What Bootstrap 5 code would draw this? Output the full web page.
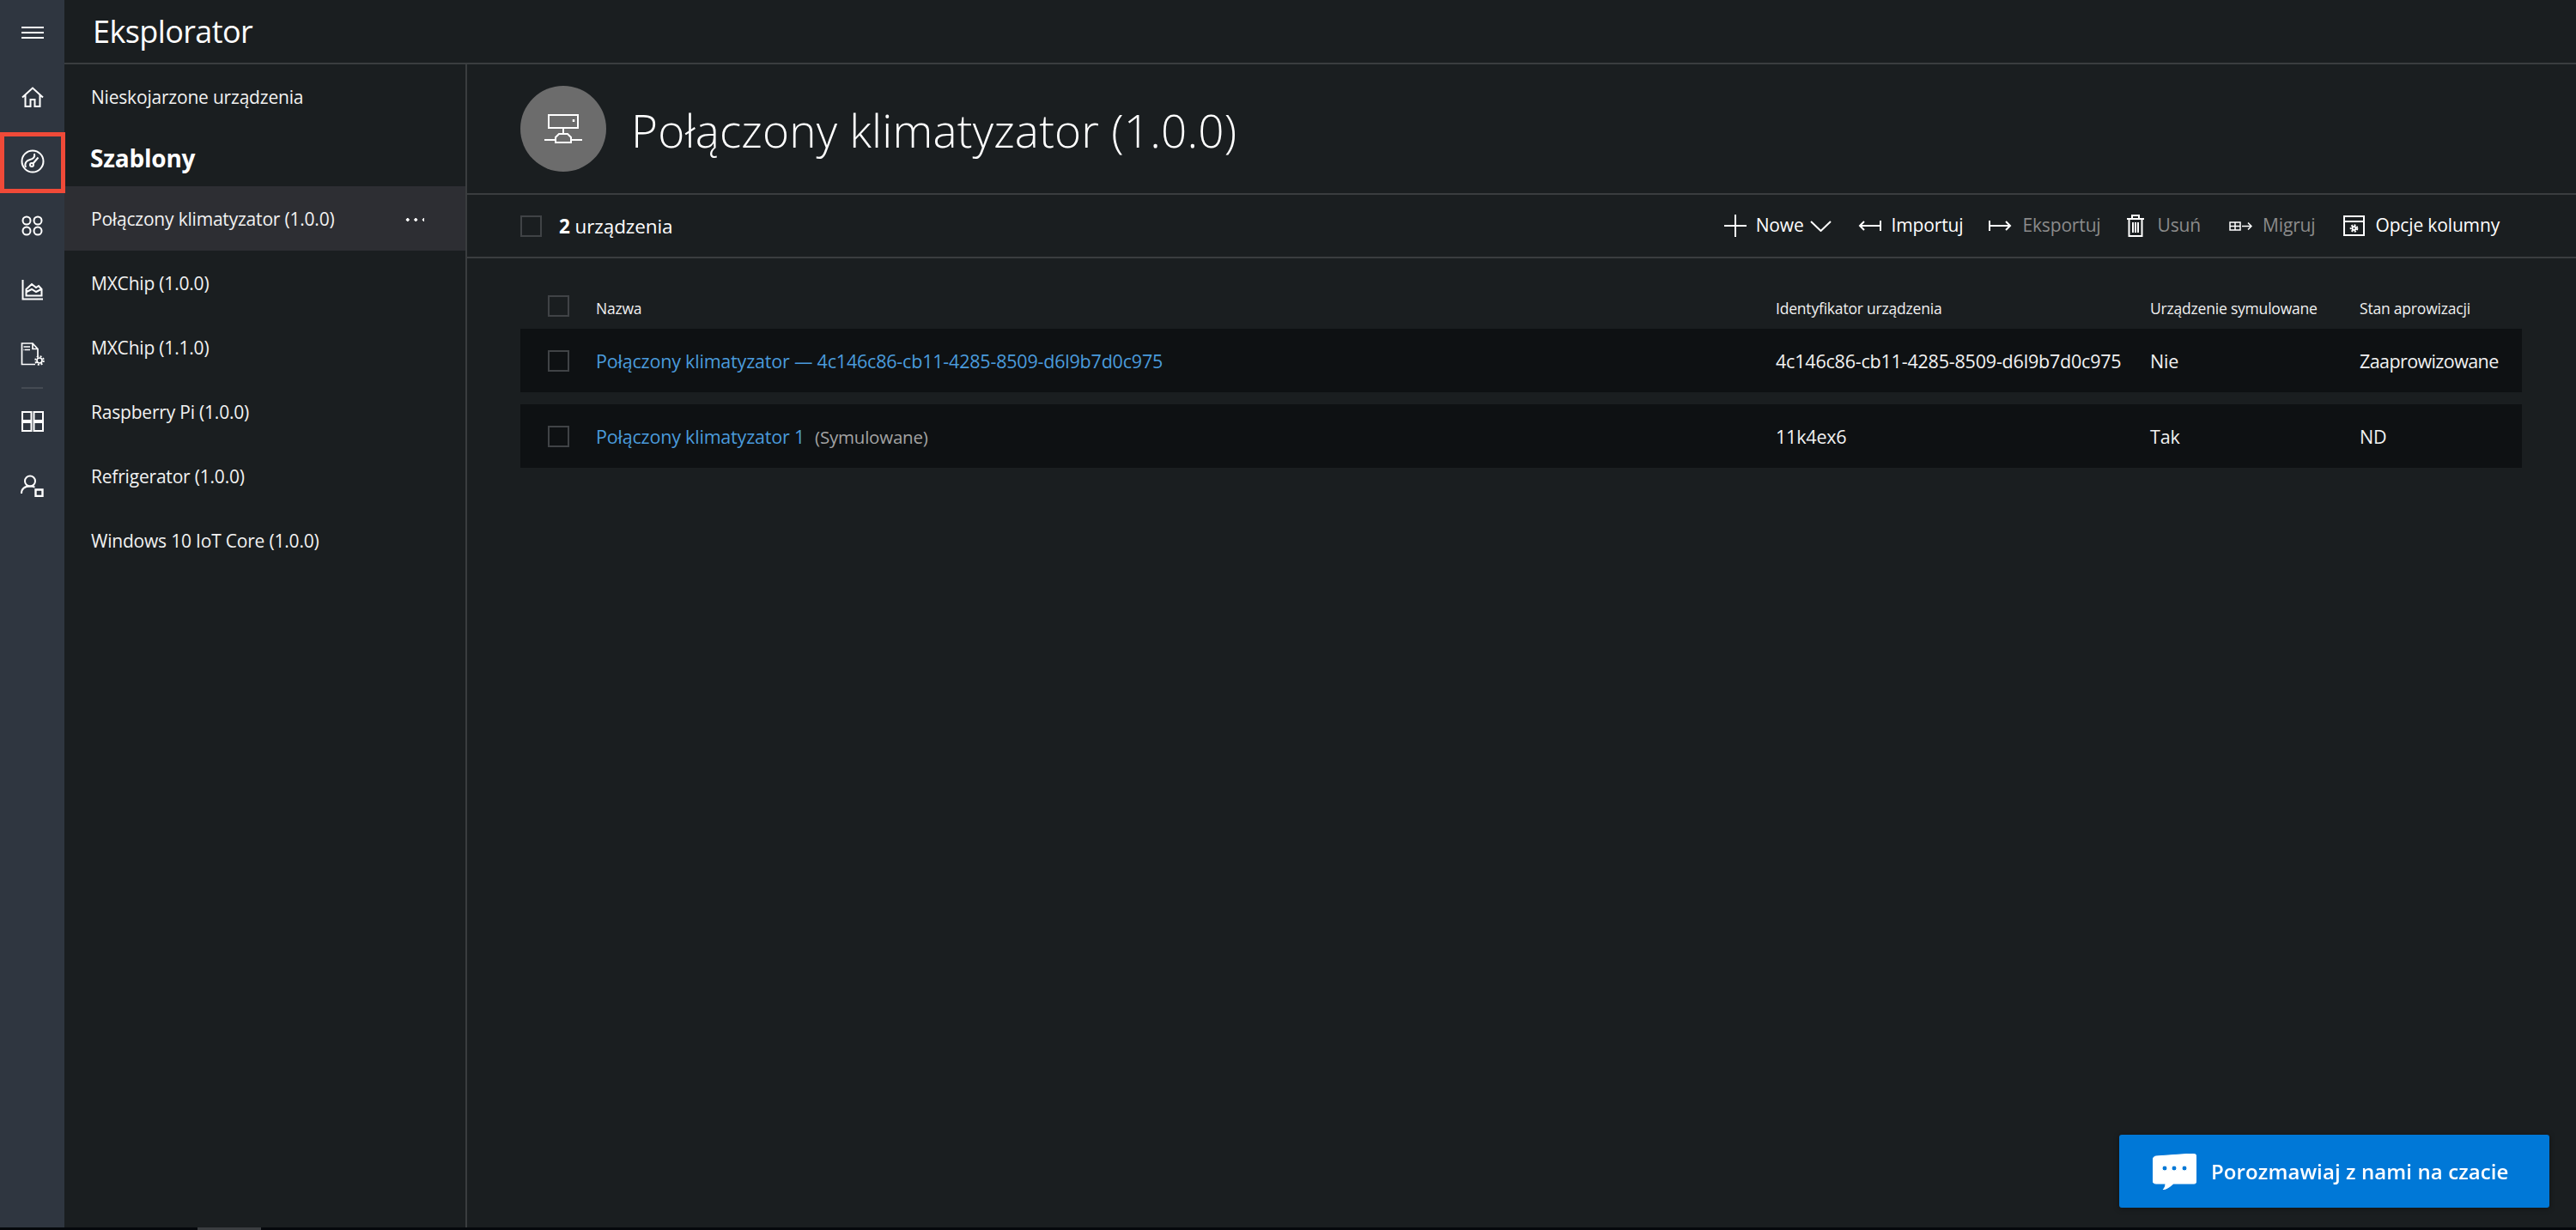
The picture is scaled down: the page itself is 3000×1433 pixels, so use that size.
<!DOCTYPE html>
<html lang="pl">
<head>
    <meta charset="UTF-8">
    <title>Eksplorator</title>
    <link href="https://cdn.jsdelivr.net/npm/bootstrap@5.3.0/dist/css/bootstrap.min.css" rel="stylesheet">
    <style>
        body { background: #05080c; font-family: "Open Sans", "Liberation Sans", sans-serif; color: #fff; height: 1433px; overflow: hidden; }
        .app-shell { height: 1430px; background: #1a1e20; }
        .scroll-strip { height: 3px; }
        .scroll-thumb { width: 74px; height: 3px; margin-left: 230px; background: #3a3d40; }

        /* left icon rail */
        .rail { width: 75px; background: #2f3640; position: relative; }
        .rail-item { height: 75px; }
        .rail-divider { height: 2px; width: 25px; margin: 1px 0 0 25px; background: #454b53; }
        .rail-mark { position: absolute; left: 0; top: 154px; width: 76px; height: 71px; border: 5px solid #f04a38; }
        svg { display: block; fill: none; stroke: #fff; }

        .top-bar { height: 75px; padding-left: 33px; }
        .top-bar span { font-size: 36px; line-height: 1; letter-spacing: -.6px; }
        .hline { border-bottom: 2px solid #3a3d3f; }

        /* templates column */
        .tpl-col { width: 469px; border-right: 2px solid #3a3d3f; flex: none; }
        .tpl-link { height: 75px; padding: 2px 48px 0 31px; font-size: 21px; letter-spacing: -.2px; color: #f2f2f2; }
        .tpl-first { height: 76px; }
        .tpl-head { height: 66px; padding-left: 30px; font-size: 28px; font-weight: 700; letter-spacing: -.2px; }
        .tpl-active { background: #2d2e33; }
        .tpl-dots { width: 24px; height: 4px; background: radial-gradient(circle 2px, #fff 98%, transparent) 0 0 / 9.5px 4px repeat-x; }

        /* device page */
        .page-head { height: 152px; padding-left: 62px; gap: 29px; flex: none; }
        .page-badge { width: 100px; height: 100px; background: #6c6c6c; }
        .page-name { font-size: 53px; font-weight: 300; letter-spacing: .2px; margin: 0; padding-top: 3px; line-height: 1; }
        .tools { height: 74px; padding-left: 62px; padding-right: 89px; flex: none; }
        .count { font-size: 22.5px; letter-spacing: -.1px; margin-left: 20px; padding-top: 2px; }
        .box { width: 25px; height: 25px; border: 2px solid #404346; flex: none; }
        .tool { font-size: 21px; letter-spacing: -.15px; gap: 12px; }
        .tool-off { color: #8b8b8b; }
        .tool-list { gap: 33px; }
        .tool-new { gap: 7px; margin-right: -2px; }
        .tool-new svg:first-child { margin-right: 4px; }
        .tool-tight { margin-right: -3px; }
        .tool-wide { gap: 16px; }

        .dev-table { padding: 0 63px 0 62px; }
        .dev-grid { display: grid; grid-template-columns: 88px 1374px 436px 244px 189px; align-items: center; }
        .dev-head { height: 82px; padding-top: 34px; font-size: 17.5px; letter-spacing: -.2px; color: #f0f0f0; }
        .dev-head .box { margin: -5px 0 0 32px; }
        .dev-row { height: 74px; margin-bottom: 14px; padding-top: 2px; background: #0e1113; font-size: 21.5px; letter-spacing: -.2px; color: #f2f2f2; }
        .dev-row .box { margin: -2px 0 0 32px; }
        .dev-link { color: #4a9bdc; text-decoration: none; }
        .dev-note { color: #a3a3a3; margin-left: 12px; font-size: 20.5px; }
        .dev-state { letter-spacing: -.6px; }

        .chat-btn { position: fixed; left: 2468px; top: 1322px; width: 501px; height: 85px; background: #0078d7; border: 0; border-radius: 3px; color: #fff; font-size: 24px; font-weight: 600; letter-spacing: .1px; gap: 17px; padding-left: 39px; box-shadow: 0 1px 6px rgba(0,0,0,.4); }
    </style>
</head>
<body>
<div class="app-shell d-flex">
    <!-- Icon rail -->
    <nav class="rail flex-shrink-0">
        <div class="rail-item d-flex align-items-center justify-content-center">
            <svg width="28" height="14" viewBox="0 0 28 14" stroke-width="2"><path d="M1 1h26M1 7h26M1 13h26"/></svg>
        </div>
        <div class="rail-item d-flex align-items-center justify-content-center">
            <svg width="26" height="24" viewBox="0 0 26 24" stroke-width="2"><path d="M1 12.500 13 1.500l12 11M4.500 10v13h6v-8h5v8h6V10"/></svg>
        </div>
        <div class="rail-item d-flex align-items-center justify-content-center">
            <svg width="28" height="28" viewBox="0 0 28 28" stroke="#c9cbcd" stroke-width="2"><circle cx="14" cy="14" r="12.500"/><circle cx="13" cy="18" r="2"/><path d="m14.500 16.500 6-7M6 21c-2-5 1-8 5-9s6-3 5-7"/></svg>
        </div>
        <div class="rail-item d-flex align-items-center justify-content-center">
            <svg width="25" height="24" viewBox="0 0 25 24" stroke="#c9cbcd" stroke-width="2"><circle cx="6" cy="6" r="4.500"/><circle cx="19" cy="6" r="4.500"/><circle cx="6" cy="18" r="4.500"/><circle cx="19" cy="18" r="4.500"/></svg>
        </div>
        <div class="rail-item d-flex align-items-center justify-content-center">
            <svg width="25" height="24" viewBox="0 0 25 24" stroke-width="2"><path d="M1.500 0v22.500H25M5.500 18.500V11L12 5l5 4 3-2 3.500 4v7.500zM6 14l6-3 5 3 6-3"/></svg>
        </div>
        <div class="rail-item d-flex align-items-center justify-content-center">
            <svg width="28" height="27" viewBox="0 0 28 27" stroke="#e6e6e6" stroke-width="1.700"><path d="M20 17V7.500L14 1H1.500v24.500H17M14 1v6.500h6M5 5h6M5 8.500h6M5 5H3.500M3.500 8.500h1"/><circle cx="22" cy="21" r="3"/><circle cx="22" cy="21" r="4.800" stroke-width="2" stroke-dasharray="2 1.770"/></svg>
        </div>
        <div class="rail-divider"></div>
        <div class="rail-item d-flex align-items-center justify-content-center">
            <svg width="26" height="24" viewBox="0 0 26 24" stroke-width="2"><path d="M1 1h10.500v10H1zM14.500 1H25v10H14.500zM1 13h10.500v10H1zM14.500 13H25v10H14.500z"/></svg>
        </div>
        <div class="rail-item d-flex align-items-center justify-content-center">
            <svg width="27" height="26" viewBox="0 0 27 26" stroke-width="2"><circle cx="11" cy="7.500" r="6"/><path d="M1 22c0-6 4-8.500 10-8.500 2 0 4 .4 5.500 1.200"/><path d="M17.500 17.500h8v7.500h-8z" stroke-width="2.400"/></svg>
        </div>
        <div class="rail-mark"></div>
    </nav>

    <div class="flex-grow-1 d-flex flex-column">
        <header class="top-bar hline d-flex align-items-center flex-shrink-0">
            <span>Eksplorator</span>
        </header>
        <div class="d-flex flex-grow-1">
            <!-- Templates -->
            <aside class="tpl-col">
                <div class="tpl-link tpl-first d-flex align-items-center">Nieskojarzone urządzenia</div>
                <div class="tpl-head d-flex align-items-center">Szablony</div>
                <div class="tpl-link tpl-active d-flex align-items-center justify-content-between">Połączony klimatyzator (1.0.0)<span class="tpl-dots"></span></div>
                <div class="tpl-link d-flex align-items-center">MXChip (1.0.0)</div>
                <div class="tpl-link d-flex align-items-center">MXChip (1.1.0)</div>
                <div class="tpl-link d-flex align-items-center">Raspberry Pi (1.0.0)</div>
                <div class="tpl-link d-flex align-items-center">Refrigerator (1.0.0)</div>
                <div class="tpl-link d-flex align-items-center">Windows 10 IoT Core (1.0.0)</div>
            </aside>

            <!-- Device page -->
            <main class="flex-grow-1 d-flex flex-column">
                <div class="page-head hline d-flex align-items-center">
                    <div class="page-badge rounded-circle d-flex align-items-center justify-content-center">
                        <svg width="44" height="34" viewBox="0 0 44 34" stroke-width="2"><path d="M5 1h34v15H5zM22 16v7M0 30h13M31 30h13M17 23h10l4 4v6H13v-6z"/><path d="M34 6v3" stroke-width="2.500"/></svg>
                    </div>
                    <h1 class="page-name">Połączony klimatyzator (1.0.0)</h1>
                </div>
                <div class="tools hline d-flex align-items-center justify-content-between">
                    <div class="d-flex align-items-center">
                        <span class="box"></span>
                        <span class="count"><b>2</b> urządzenia</span>
                    </div>
                    <div class="tool-list d-flex align-items-center">
                        <div class="tool tool-new d-flex align-items-center">
                            <svg width="26" height="26" viewBox="0 0 26 26" stroke-width="2"><path d="M13 0v26M0 13h26"/></svg>
                            <span>Nowe</span>
                            <svg width="25" height="13" viewBox="0 0 25 13" stroke-width="2"><path d="m1 1 11.500 11L24 1"/></svg>
                        </div>
                        <div class="tool tool-tight d-flex align-items-center">
                            <svg width="27" height="14" viewBox="0 0 27 14" stroke-width="2"><path d="M26 1v12M26 7H2M7 2 2 7l5 5"/></svg>
                            <span>Importuj</span>
                        </div>
                        <div class="tool tool-off tool-tight d-flex align-items-center">
                            <svg width="27" height="14" viewBox="0 0 27 14" stroke="#8b8b8b" stroke-width="2"><path d="M1 1v12M1 7h24M20 2l5 5-5 5"/></svg>
                            <span>Eksportuj</span>
                        </div>
                        <div class="tool tool-off tool-wide d-flex align-items-center">
                            <svg width="20" height="26" viewBox="0 0 20 26" stroke="#8b8b8b" stroke-width="2"><path d="M0 5h20M6 5V1h8v4M2.500 5v20h15V5M7 9v12M10 9v12M13 9v12"/></svg>
                            <span>Usuń</span>
                        </div>
                        <div class="tool tool-off d-flex align-items-center">
                            <svg width="27" height="11" viewBox="0 0 27 11" stroke="#8b8b8b" stroke-width="1.500"><path d="M1 1h12v9H1zM7 1v9M1 5.500h12M15 5.500h11M22 1.500l4 4-4 4"/></svg>
                            <span>Migruj</span>
                        </div>
                        <div class="tool d-flex align-items-center">
                            <svg width="25" height="24" viewBox="0 0 25 24" stroke-width="2"><path d="M1 1h23v22H1zM1 7h23"/><circle cx="12.500" cy="15" r="2"/><circle cx="12.500" cy="15" r="3.800" stroke-width="2" stroke-dasharray="2 1.500"/></svg>
                            <span>Opcje kolumny</span>
                        </div>
                    </div>
                </div>

                <div class="dev-table">
                    <div class="dev-grid dev-head">
                        <span class="box"></span>
                        <span>Nazwa</span>
                        <span>Identyfikator urządzenia</span>
                        <span>Urządzenie symulowane</span>
                        <span>Stan aprowizacji</span>
                    </div>
                    <div class="dev-grid dev-row">
                        <span class="box"></span>
                        <span><a class="dev-link" href="#">Połączony klimatyzator — 4c146c86-cb11-4285-8509-d6l9b7d0c975</a></span>
                        <span>4c146c86-cb11-4285-8509-d6l9b7d0c975</span>
                        <span>Nie</span>
                        <span class="dev-state">Zaaprowizowane</span>
                    </div>
                    <div class="dev-grid dev-row">
                        <span class="box"></span>
                        <span><a class="dev-link" href="#">Połączony klimatyzator 1</a><span class="dev-note">(Symulowane)</span></span>
                        <span>11k4ex6</span>
                        <span>Tak</span>
                        <span>ND</span>
                    </div>
                </div>
            </main>
        </div>
    </div>
</div>
<div class="scroll-strip"><div class="scroll-thumb"></div></div>

<button class="chat-btn d-flex align-items-center" type="button">
    <svg width="51" height="42" viewBox="0 0 51 42" stroke="none"><path fill="#fff" d="M4 3 47 0c2 0 4 1 4 4v28c0 2-1 3-3 3H24c-3 3-7 6-12 7 2-2 3-4 3-7H4c-2 0-4-1-4-3V7c0-2 2-4 4-4z"/><circle fill="#0078d7" cx="14" cy="17" r="3"/><circle fill="#0078d7" cx="25" cy="17" r="3"/><circle fill="#0078d7" cx="37" cy="17" r="3"/></svg>
    <span>Porozmawiaj z nami na czacie</span>
</button>

<script src="https://cdn.jsdelivr.net/npm/bootstrap@5.3.0/dist/js/bootstrap.bundle.min.js"></script>
</body>
</html>
